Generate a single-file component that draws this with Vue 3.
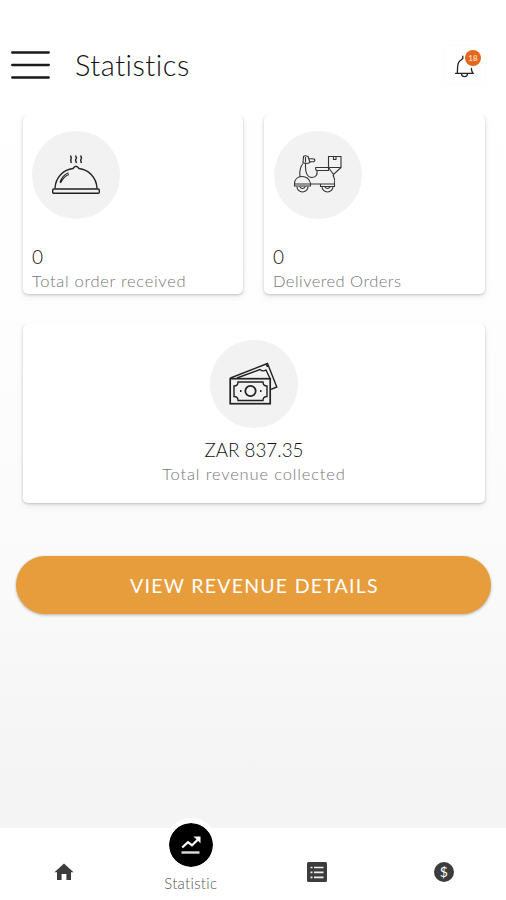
<script setup>
const cards = [
  { id: 'received', value: '0', label: 'Total order received' },
  { id: 'delivered', value: '0', label: 'Delivered Orders' },
  { id: 'revenue', value: 'ZAR 837.35', label: 'Total revenue collected' },
]
</script>

<template>
  <div class="screen">
    <header class="header">
      <button class="menu" aria-label="Menu">
        <svg width="39" height="30" viewBox="0 0 39 30" stroke="#1a1a1a" stroke-width="2.300" stroke-linecap="round"><path d="M1.200 2.500H37.800M1.200 15H37.800M1.200 27.500H37.800" /></svg>
      </button>
      <h1>Statistics</h1>
      <button class="bell" aria-label="Notifications">
        <svg width="22" height="26" viewBox="0 0 22 26" fill="none" stroke="#222" stroke-width="1.3" stroke-linecap="round">
          <path d="M1.5 20.3H19.5M3.4 20C3.5 17 3.2 12.500 4.600 9.500C5.500 7.500 7.500 6.800 8.800 5.600V3.200M17.500 15.500V17L18.600 20M7.500 21C8 24.600 13 24.600 13.500 21" />
        </svg>
        <span class="badge">18</span>
      </button>
    </header>

    <main>
      <section class="cards">
        <article v-for="card in cards" :key="card.id" class="card" :class="card.id">
          <div class="disc">
            <svg v-if="card.id === 'received'" width="48" height="42" viewBox="0 0 48 42" fill="none" stroke="#222" stroke-width="1.4">
              <rect x="0.700" y="35" width="46.600" height="4.300" rx="1" />
              <path d="M3 34.500C3.500 23 12 15.500 21 14.500Q24 10 27 14.500C36 15.500 44.500 23 45 34.500" />
              <path d="M8 28.500Q10 21.500 16.500 18.800M8.500 29Q12 22 17 20.500" stroke-width="1.200" />
              <path d="M18.500 1.500L19.300 4L18.700 6L19.300 9M23.500 1.500L24.500 4L23.500 6L24.500 9M28.700 1.500L29.500 4L28.700 6L29.300 9" />
            </svg>
            <svg v-else-if="card.id === 'delivered'" width="50" height="40" viewBox="0 0 50 40" fill="none" stroke="#333" stroke-width="1.100">
              <path d="M35.500 1.500H48V12.500H35.500ZM40.500 1.500V4.500H43V1.500M35.500 12.500L40.500 19.500L48 12.500M40.500 19.500V22" />
              <path d="M22.500 12.500H35.500V15.500H24Q22.500 15.500 22.500 12.500M24 15.500Q25 22 19 22.500Q12 22.500 12.500 9M10 8.500Q6 13 7 22" />
              <path d="M10.500 1.500Q12 0 15 1.500L17 7.500Q12.500 9.500 10 7.500ZM15.500 3.500L21 4Q23 5.500 20.500 6.800L16.500 6.500M12.500 2V7.500" />
              <path d="M1.500 29C1.500 24 5 21.500 9 21.500C13 21.500 16.500 24 17.500 28.500M1.500 29H41.500M41.500 29Q42.500 24.500 40 20M1.500 29V31H17.500V28.500" />
              <path d="M4 31.500A5.500 5.500 0 0 0 15 31.500M29 31.500A5.500 5.500 0 0 0 40 31.500M6.500 31.500Q9.500 35.500 12.500 31.500M31.500 31.500Q34.500 35.500 37.500 31.500M27.500 29V31.500H41.500V29" />
            </svg>
            <svg v-else width="50" height="44" viewBox="0 0 50 44" fill="none" stroke="#222" stroke-width="1.400">
              <rect x="1.200" y="16.700" width="40" height="25" stroke-width="1.700" />
              <path d="M9 20H34Q34 24 38 24V34.500Q34 34.500 34 38.500H9Q9 34.500 5 34.500V24Q9 24 9 20Z" />
              <circle cx="21.500" cy="29" r="5.200" stroke-width="1.800" />
              <path d="M1.500 16L38.500 1.500L47.800 25L42 27.300M8 16L31 7.500Q34 10 37 8L41 16.500M37 1.800L38.500 5" />
              <path d="M11 29h1.500M31 29h1.500" stroke-width="1.800" />
            </svg>
          </div>
          <strong>{{ card.value }}</strong>
          <p>{{ card.label }}</p>
        </article>
      </section>
      <button class="details">VIEW REVENUE DETAILS</button>
    </main>

    <nav class="nav">
      <a aria-label="Home">
        <svg width="20" height="18" viewBox="0 0 20 18"><path d="M10 0.500L0.500 9.200H3V17H7.600V11H12.400V17H17V9.200H19.500Z" fill="#3c3c3c" /></svg>
      </a>
      <a class="active">
        <span class="bubble">
          <svg width="22" height="20" viewBox="0 0 22 20" fill="none">
            <path d="M2.200 12.500L8 7.200L12 10.300L18.500 4" stroke="#fff" stroke-width="2.200" />
            <path d="M13.500 1.500H20.500V8.200Z" fill="#fff" />
            <path d="M1.500 17.500H19.500" stroke="#ddd" stroke-width="2.400" />
          </svg>
        </span>
        <span class="caption">Statistic</span>
      </a>
      <a aria-label="Orders">
        <svg width="20" height="20" viewBox="0 0 20 20"><rect width="20" height="20" rx="1.500" fill="#3c3c3c" /><path d="M7 5.500H16.500M7 10.300H16.500M7 15.300H16.500M3.500 5.500H5.500M3.500 10.300H5.500M3.500 15.300H5.500" stroke="#eee" stroke-width="1.700" /></svg>
      </a>
      <a aria-label="Earnings"><span class="coin">$</span></a>
    </nav>
  </div>
</template>

<style>
body { margin: 0; background: #fff; }
</style>

<style scoped>
.screen {
  width: 506px;
  height: 900px;
  display: flex;
  flex-direction: column;
  overflow: hidden;
  font-family: Lato, "Liberation Sans", sans-serif;
  font-weight: 300;
  background: linear-gradient(#fff 0, #fefefe 280px, #fafafa 580px, #f4f4f4 780px);
}
button { border: 0; padding: 0; background: none; font: inherit; }
.header {
  box-sizing: border-box;
  height: 115px;
  padding: 14px 21px 0 11px;
  display: flex;
  align-items: center;
}
.menu { width: 39px; }
.menu svg { display: block; }
h1 { margin: 0 0 0 25px; font-size: 29px; line-height: 36px; font-weight: 300; letter-spacing: 0.500px; color: #111; }
.bell {
  position: relative;
  box-sizing: border-box;
  width: 40px;
  height: 38px;
  margin-left: auto;
  padding: 3px 0 0 9px;
  text-align: left;
  border-radius: 4px;
  box-shadow: 0 0 2px #f3f3f3;
}
.bell svg { display: block; }
.badge {
  position: absolute;
  left: 20px;
  top: 4px;
  width: 16px;
  height: 16px;
  border-radius: 50%;
  background: #e4681b;
  color: #fbd9c4;
  font: 700 8px/16px Lato, sans-serif;
  text-align: center;
}
main { flex: 1; padding: 0 15px 0 16px; }
.cards {
  display: grid;
  grid-template-columns: 220px 221px;
  gap: 30px 21px;
  padding: 0 6px 0 7px;
}
.card {
  box-sizing: border-box;
  height: 179px;
  padding: 16px 9px 0;
  display: flex;
  flex-direction: column;
  background: #fff;
  border-radius: 5px;
  box-shadow: 0 1px 3px rgba(0, 0, 0, 0.220), 0 4px 8px rgba(0, 0, 0, 0.050);
  clip-path: inset(0 -12px -14px -12px);
}
.delivered { padding-left: 10px; }
.revenue { grid-column: 1 / 3; align-items: center; }
.disc {
  width: 88px;
  height: 88px;
  border-radius: 50%;
  background: #f2f2f2;
  display: flex;
  align-items: center;
  justify-content: center;
}
.disc svg { display: block; }
strong { margin-top: 26px; font-size: 19px; line-height: 24px; font-weight: 300; color: #111; }
.delivered strong, .delivered p { position: relative; left: -1px; }
.revenue strong { margin-top: 10px; letter-spacing: 0; font-size: 18.800px; }
.card p { margin: 0; font-size: 16.500px; line-height: 25px; letter-spacing: 0.700px; color: #777; }
.delivered p { letter-spacing: 0.450px; }
.revenue p { letter-spacing: 0.850px; }
.details {
  display: block;
  width: 475px;
  height: 58px;
  margin-top: 53px;
  border-radius: 29px;
  background: #e79d3b;
  box-shadow: 0 1px 3px rgba(0, 0, 0, 0.300);
  color: #fff;
  font-size: 19.500px;
  font-weight: 400;
  letter-spacing: 1.250px;
  padding-left: 2px;
}
.nav {
  height: 72px;
  display: grid;
  grid-template-columns: repeat(4, 126.500px);
  background: #fff;
}
.nav a { display: flex; align-items: center; justify-content: center; padding: 16px 0 0 2px; }
.nav svg { display: block; }
.nav .active { flex-direction: column; justify-content: flex-start; padding: 0 0 0 2px; margin-top: -10px; }
.bubble {
  width: 44px;
  height: 44px;
  border: 5px solid #fff;
  border-radius: 50%;
  background: #000;
  background-clip: padding-box;
  display: flex;
  align-items: center;
  justify-content: center;
}
.caption { font-size: 15px; line-height: 18px; letter-spacing: 0.300px; color: #555; margin-top: 2px; }
.coin {
  width: 20px;
  height: 20px;
  border-radius: 50%;
  background: #3c3c3c;
  color: #fff;
  font-size: 14px;
  line-height: 20px;
  font-weight: 400;
  text-align: center;
}
</style>
